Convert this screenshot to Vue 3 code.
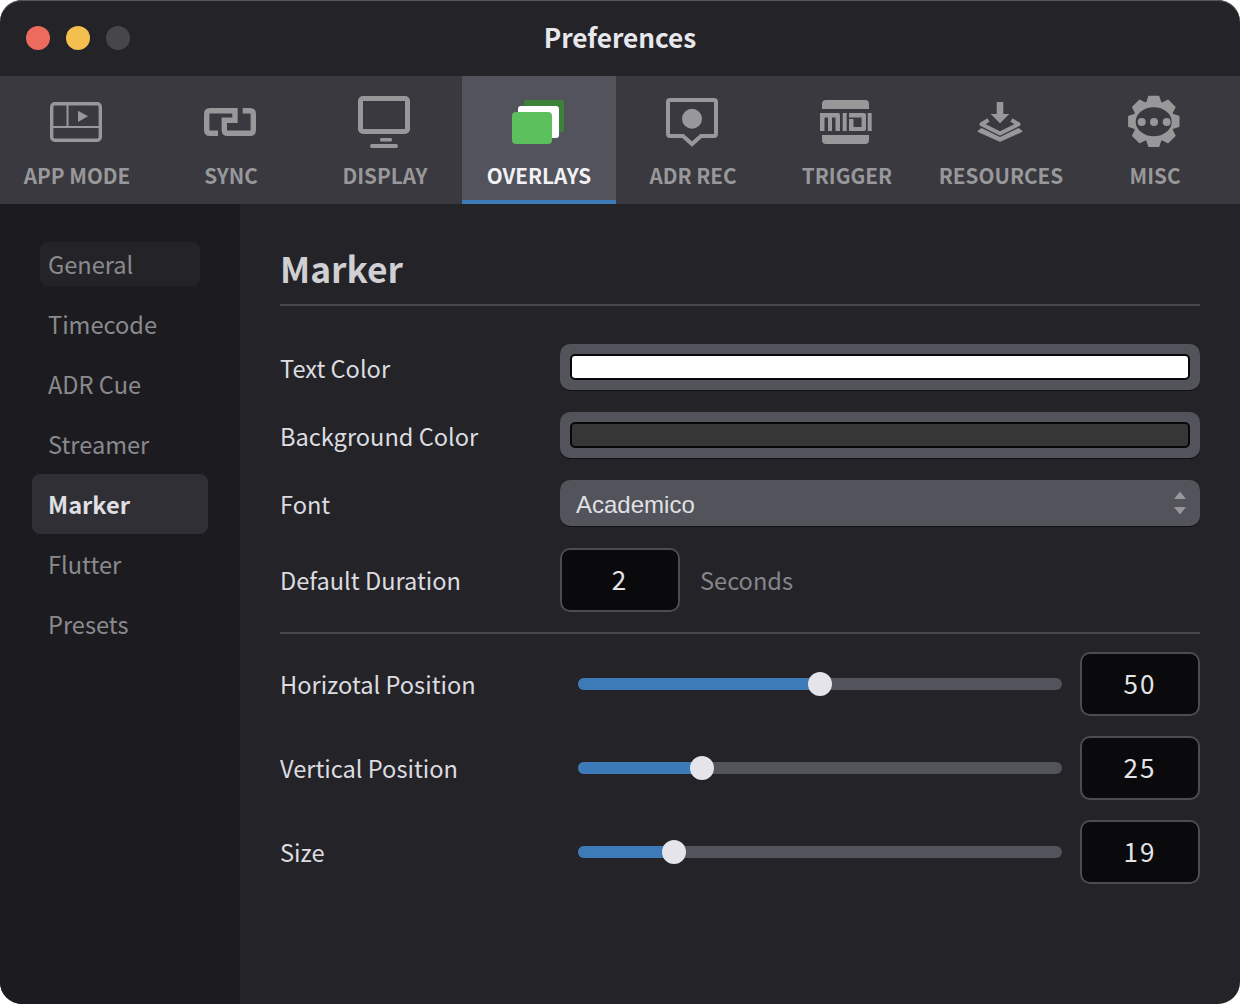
<template>
  <div class="window">
    <header class="titlebar">
      <div class="lights">
        <span class="light red"></span>
        <span class="light yellow"></span>
        <span class="light off"></span>
      </div>
      <h1 class="window-title">Preferences</h1>
    </header>

    <nav class="tabs">
      <div v-for="tab in tabs" :key="tab.label" class="tab" :class="{ active: tab.label === 'OVERLAYS' }">
        <svg class="tab-icon" viewBox="0 0 64 56" width="64" height="56">
          <g v-if="tab.icon === 'app'">
            <rect x="6.7" y="9.7" width="48.6" height="36.6" rx="3" fill="none" stroke="#98989a" stroke-width="3.4" />
            <path d="M22.5 9.7V33M6.7 33H55.3" fill="none" stroke="#98989a" stroke-width="2" />
            <path d="M33 16.7L43 22.3L33 28Z" fill="#98989a" />
          </g>
          <g v-else-if="tab.icon === 'sync'">
            <path
              d="M19 39.3H11Q7.7 39.3 7.7 36V20Q7.7 16.7 11 16.7H36V26.3H25.3V36Q25.3 39.3 28.6 39.3H51Q54.3 39.3 54.3 36V20Q54.3 16.7 51 16.7H43.7"
              fill="none"
              stroke="#98989a"
              stroke-width="5.4"
            />
          </g>
          <g v-else-if="tab.icon === 'display'">
            <rect x="7.5" y="4.5" width="47" height="33" rx="2.5" fill="none" stroke="#98989a" stroke-width="5" />
            <rect x="27" y="44" width="12" height="3.5" rx="1.5" fill="#98989a" />
            <rect x="17" y="50" width="28" height="4" rx="2" fill="#98989a" />
          </g>
          <g v-else-if="tab.icon === 'overlays'">
            <rect x="17" y="6" width="40" height="32" rx="3" fill="#3c8238" />
            <rect x="11" y="12" width="41" height="32" rx="3" fill="#fff" />
            <rect x="5" y="18" width="40" height="32" rx="4" fill="#5cc05c" />
          </g>
          <g v-else-if="tab.icon === 'adr'">
            <path d="M9 6H53Q55 6 55 8V40Q55 42 53 42H40L31 50L22 42H9Q7 42 7 40V8Q7 6 9 6Z" fill="none" stroke="#98989a" stroke-width="4" />
            <circle cx="31" cy="24.7" r="10" fill="#98989a" />
          </g>
          <g v-else-if="tab.icon === 'midi'">
            <path d="M7 10Q7 6 11 6H50Q54 6 54 10V15H7Z" fill="#98989a" />
            <path d="M7 41H54V46Q54 50 50 50H11Q7 50 7 46Z" fill="#98989a" />
            <path d="M5 19H23Q25 19 25 21V37H20.5V23.5H17V37H13V23.5H9.5V37H5Z" fill="#98989a" />
            <path d="M27.7 19H31.7V37H27.7Z" fill="#98989a" />
            <path d="M34 19H49Q51 19 51 21V35Q51 37 49 37H34V25H38.5V33H46.5V23.5H34Z" fill="#98989a" />
            <path d="M52.7 19H56.7V37H52.7Z" fill="#98989a" />
          </g>
          <g v-else-if="tab.icon === 'resources'">
            <path d="M27.7 8H34.3V20H40.3L31 29.3L21.7 20H27.7Z" fill="#98989a" />
            <path d="M19.5 26L12.5 30.3L31 39.5L49.5 30.3L42.5 26" fill="none" stroke="#98989a" stroke-width="4" stroke-linejoin="round" />
            <path d="M12.5 34L9 36.5Q8 37.5 9.5 38.3L29 47Q31 48 33 47L52.5 38.3Q54 37.5 53 36.5L49.5 34L31 43Z" fill="#98989a" />
          </g>
          <g v-else>
            <path :d="gearPath" fill="#98989a" stroke="#98989a" stroke-width="1.5" stroke-linejoin="round" />
            <ellipse cx="30.7" cy="27.7" rx="18" ry="14.5" fill="#39393f" />
            <circle cx="18.7" cy="28" r="4" fill="#98989a" />
            <circle cx="31" cy="28" r="4" fill="#98989a" />
            <circle cx="43.7" cy="28" r="4" fill="#98989a" />
          </g>
        </svg>
        <span class="tab-label">{{ tab.label }}</span>
      </div>
    </nav>

    <div class="body">
      <aside class="sidebar">
        <div
          v-for="item in sections"
          :key="item"
          class="side-item"
          :class="{ selected: item === 'Marker', hovered: item === 'General' }"
        >
          {{ item }}
        </div>
      </aside>

      <main class="content">
        <h2 class="content-title">Marker</h2>

        <div class="form-row swatch-row">
          <label>Text Color</label>
          <div class="swatch-well"><div class="swatch white"></div></div>
        </div>
        <div class="form-row swatch-row">
          <label>Background Color</label>
          <div class="swatch-well"><div class="swatch dark"></div></div>
        </div>
        <div class="form-row swatch-row">
          <label>Font</label>
          <div class="select">
            <span class="select-value">Academico</span>
            <svg viewBox="0 0 12 24" width="12" height="24">
              <path d="M6 0.5L12 8H0ZM0 16H12L6 23.5Z" fill="#98989c" />
            </svg>
          </div>
        </div>
        <div class="form-row duration-row">
          <label>Default Duration</label>
          <div class="num-box small">2</div>
          <span class="unit">Seconds</span>
        </div>

        <div class="sliders">
          <div v-for="s in sliders" :key="s.label" class="form-row slider-row">
            <label>{{ s.label }}</label>
            <div class="track">
              <div class="fill" :style="{ width: s.fill + 'px' }"></div>
              <div class="thumb" :style="{ left: s.fill + 'px' }"></div>
            </div>
            <div class="num-box">{{ s.value }}</div>
          </div>
        </div>
      </main>
    </div>
  </div>
</template>

<script setup>
const tabs = [
  { label: 'APP MODE', icon: 'app' },
  { label: 'SYNC', icon: 'sync' },
  { label: 'DISPLAY', icon: 'display' },
  { label: 'OVERLAYS', icon: 'overlays' },
  { label: 'ADR REC', icon: 'adr' },
  { label: 'TRIGGER', icon: 'midi' },
  { label: 'RESOURCES', icon: 'resources' },
  { label: 'MISC', icon: 'misc' }
]

const sections = ['General', 'Timecode', 'ADR Cue', 'Streamer', 'Marker', 'Flutter', 'Presets']

// fill is the thumb centre measured from the track's left end
const sliders = [
  { label: 'Horizotal Position', value: '50', fill: 242 },
  { label: 'Vertical Position', value: '25', fill: 124 },
  { label: 'Size', value: '19', fill: 96 }
]

// 8-tooth gear outline for the MISC icon
function buildGear(cx, cy, outer, root) {
  const pts = []
  for (let i = 0; i < 8; i++) {
    const a = (i * 45 - 90) * Math.PI / 180
    const steps = [[-20, root], [-11, outer], [11, outer], [20, root]]
    for (const [d, r] of steps) {
      const t = a + d * Math.PI / 180
      pts.push((cx + r * Math.cos(t)).toFixed(2) + ' ' + (cy + r * Math.sin(t)).toFixed(2))
    }
  }
  return 'M' + pts.join('L') + 'Z'
}

const gearPath = buildGear(30.8, 27.4, 25.4, 20)
</script>

<style>
html,
body {
  margin: 0;
  background: #fff;
}
</style>

<style scoped>
.window {
  width: 1240px;
  height: 1004px;
  border-radius: 22px;
  overflow: hidden;
  background: #242428;
  font-family: "Noto Sans CJK JP", "Noto Sans", sans-serif;
  color: #e4e4e8;
  box-shadow: inset 0 1px 0 #55555a;
}

.titlebar {
  height: 76px;
  box-sizing: border-box;
  padding-bottom: 2px;
  position: relative;
  display: flex;
  align-items: center;
  justify-content: center;
}

.lights {
  position: absolute;
  left: 26px;
  top: 26px;
  display: flex;
  gap: 16px;
}

.light {
  width: 24px;
  height: 24px;
  border-radius: 50%;
}

.red { background: #ed6a5e; }
.yellow { background: #f5bf4f; }
.off { background: #47474b; }

.window-title {
  margin: 0;
  font-size: 26.2px;
  line-height: 36px;
  font-weight: 700;
  color: #e8e8ec;
}

.tabs {
  height: 128px;
  display: flex;
  background: #39393f;
}

.tab {
  width: 154px;
  height: 128px;
  box-sizing: border-box;
  display: flex;
  flex-direction: column;
  align-items: center;
  padding-top: 18px;
}

.tab.active {
  background: #52535b;
  border-bottom: 4px solid #3d7ab8;
}

.tab-icon {
  display: block;
}

.tab-label {
  margin-top: 9px;
  font-size: 20.7px;
  line-height: 32px;
  font-weight: 700;
  color: #98989a;
  white-space: nowrap;
}

.tab.active .tab-label {
  color: #f2f2f6;
}

.body {
  display: flex;
  height: 800px;
}

.sidebar {
  width: 240px;
  box-sizing: border-box;
  padding: 30px 32px 0;
  background: #1c1c20;
}

.side-item {
  height: 60px;
  box-sizing: border-box;
  padding-left: 16px;
  display: flex;
  align-items: center;
  font-size: 23.6px;
  color: #8a8a8e;
  border-radius: 8px;
}

.side-item.hovered {
  height: 44px;
  margin: 8px;
  padding-left: 8px;
  background: #242428;
}

.side-item.selected {
  background: #2f2f35;
  color: #e0e0e4;
  font-weight: 700;
}

.content {
  flex: 1;
  box-sizing: border-box;
  padding: 0 40px;
}

.content-title {
  margin: 0 0 38px;
  height: 102px;
  box-sizing: border-box;
  padding-top: 38px;
  font-size: 35.4px;
  line-height: 52px;
  font-weight: 700;
  color: #d0d0d4;
  border-bottom: 2px solid #47474c;
}

.form-row {
  display: flex;
  align-items: center;
}

.form-row label {
  width: 280px;
  flex-shrink: 0;
  font-size: 23.6px;
  line-height: 36px;
  color: #dcdce0;
}

.swatch-row {
  margin-bottom: 22px;
}

.swatch-row label {
  padding-top: 2px;
}

.swatch-well {
  flex: 1;
  height: 46px;
  box-sizing: border-box;
  padding: 10px;
  background: #52535b;
  border-radius: 10px;
  box-shadow: 0 1px 0 #111114;
}

.swatch {
  height: 26px;
  box-sizing: border-box;
  border: 2px solid #08080a;
  border-radius: 5px;
}

.swatch.white { background: #fff; }
.swatch.dark { background: #363636; }

.select {
  flex: 1;
  height: 46px;
  box-sizing: border-box;
  padding: 0 14px 0 16px;
  display: flex;
  align-items: center;
  justify-content: space-between;
  background: #52535b;
  border-radius: 10px;
  box-shadow: 0 1px 0 #111114;
  font-family: "Liberation Sans", Arial, sans-serif;
  font-size: 24px;
  color: #e0e0e4;
}

.select-value {
  padding-top: 4px;
}

.duration-row {
  padding-bottom: 20px;
  border-bottom: 2px solid #47474c;
}

.num-box {
  width: 120px;
  height: 64px;
  box-sizing: border-box;
  padding-bottom: 4px;
  display: flex;
  align-items: center;
  justify-content: center;
  background: #0a0a0c;
  border: 2px solid #4c4c52;
  border-radius: 10px;
  font-size: 26px;
  letter-spacing: 2px;
  color: #e4e4e8;
}

.unit {
  margin-left: 20px;
  font-size: 23.6px;
  color: #85858a;
}

.sliders {
  padding-top: 18px;
  display: flex;
  flex-direction: column;
  gap: 20px;
}

.slider-row label {
  width: 298px;
}

.track {
  width: 484px;
  height: 12px;
  margin-right: 18px;
  position: relative;
  border-radius: 6px;
  background: #52535b;
}

.fill {
  height: 12px;
  border-radius: 6px 0 0 6px;
  background: #3d7ab8;
}

.thumb {
  position: absolute;
  top: -6px;
  width: 24px;
  height: 24px;
  margin-left: -12px;
  border-radius: 50%;
  background: #e4e4ea;
}
</style>
